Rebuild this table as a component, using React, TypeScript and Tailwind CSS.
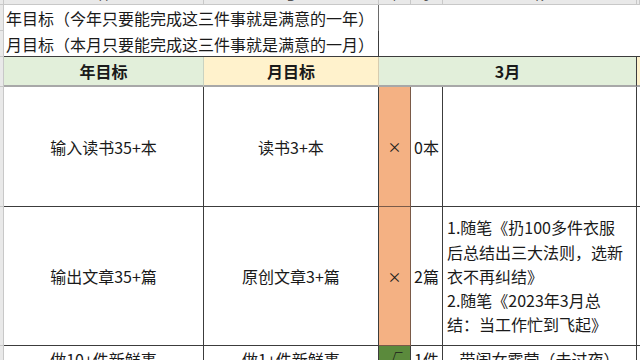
import React from "react";

const font = { fontFamily: '"Noto Sans CJK SC", "Noto Sans", sans-serif' };

export default function App() {
  const dark = "border-[#3c3c3c]";
  return (
    <div
      className="w-[640px] h-[360px] overflow-hidden bg-white text-[#1a1a1a] text-[16px]"
      style={font}
    >
      <div className="grid grid-cols-[4px_200px_175px_32px_32px_194px_1fr] grid-rows-[5px_26px_26px_30px_120px_139px_40px]">
        {/* top column-letter strip */}
        <div className="bg-[#e9e9e9] border-b border-r border-[#c8c8c8]" />
        {["A", "B", "I", "J", "K", ""].map((l, i) => (
          <div
            key={i}
            className="bg-[#e9e9e9] border-b border-r border-[#c8c8c8] overflow-hidden flex justify-center"
          >
            <span className="text-[12px] leading-[12px] -mt-[9px] text-[#555]" style={{ fontFamily: '"Liberation Sans", sans-serif' }}>
              {l}
            </span>
          </div>
        ))}

        {/* row 1 */}
        <div className="bg-[#e9e9e9] border-r border-b border-[#c8c8c8]" />
        <div className="col-span-2 border-r border-[#6a6a6a] pl-[2px] flex items-center whitespace-nowrap leading-none">
          年目标（今年只要能完成这三件事就是满意的一年）
        </div>
        <div className={`col-span-4 row-span-2 border-b ${dark}`} />

        {/* row 2 */}
        <div className="bg-[#e9e9e9] border-r border-b border-[#c8c8c8]" />
        <div className={`col-span-2 border-r border-b ${dark} pl-[2px] flex items-center whitespace-nowrap leading-none`}>
          月目标（本月只要能完成这三件事就是满意的一月）
        </div>

        {/* header row */}
        <div className="bg-[#e9e9e9] border-r border-b border-[#c8c8c8]" />
        <div className="bg-[#e2efda] border-r border-[#c9d3c2] border-b-2 border-b-[#a8a8a8] flex items-center justify-center font-bold">
          年目标
        </div>
        <div className="bg-[#fff2cc] border-r border-[#d6ccb0] border-b-2 border-b-[#a8a8a8] flex items-center justify-center font-bold">
          月目标
        </div>
        <div className={`col-span-3 bg-[#e2efda] border-r ${dark} border-b-2 border-b-[#a8a8a8] flex items-center justify-center font-bold`}>
          3月
        </div>
        <div className="bg-[#fff2cc] border-b-2 border-b-[#a8a8a8]" />

        {/* row 3 */}
        <div className="bg-[#e9e9e9] border-r border-b border-[#c8c8c8]" />
        <div className={`border-r border-b ${dark} flex items-center justify-center`}>输入读书35+本</div>
        <div className={`border-r border-b ${dark} flex items-center justify-center`}>读书3+本</div>
        <div className={`bg-[#f4b183] border-r border-b border-[#7a5a48] flex items-center justify-center text-[14px]`}>×</div>
        <div className={`border-r border-b ${dark} flex items-center justify-center whitespace-nowrap`}>0本</div>
        <div className={`border-r border-b ${dark}`} />
        <div className={`border-b ${dark}`} />

        {/* row 4 */}
        <div className="bg-[#e9e9e9] border-r border-b border-[#c8c8c8]" />
        <div className={`border-r border-b ${dark} flex items-center justify-center`}>输出文章35+篇</div>
        <div className={`border-r border-b ${dark} flex items-center justify-center`}>原创文章3+篇</div>
        <div className={`bg-[#f4b183] border-r border-b border-[#7a5a48] flex items-center justify-center text-[14px]`}>×</div>
        <div className={`border-r border-b ${dark} flex items-center justify-center whitespace-nowrap`}>2篇</div>
        <div className={`border-r border-b ${dark} flex flex-col justify-center pl-[4px] leading-[24.3px] whitespace-nowrap`}>
          <span>1.随笔《扔100多件衣服</span>
          <span>后总结出三大法则，选新</span>
          <span>衣不再纠结》</span>
          <span>2.随笔《2023年3月总</span>
          <span>结：当工作忙到飞起》</span>
        </div>
        <div className={`border-b ${dark}`} />

        {/* row 5 */}
        <div className="bg-[#e9e9e9] border-r border-[#c8c8c8]" />
        <div className={`border-r ${dark} flex justify-center leading-[24px] pt-[1px]`}>做10+件新鲜事</div>
        <div className={`border-r ${dark} flex justify-center leading-[24px] pt-[1px]`}>做1+件新鲜事</div>
        <div className={`bg-[#5b8a3c] border-r ${dark} flex justify-center leading-[24px] pt-[1px]`}>√</div>
        <div className={`border-r ${dark} flex justify-center leading-[24px] pt-[1px] whitespace-nowrap`}>1件</div>
        <div className={`border-r ${dark} flex justify-center leading-[24px] pt-[1px] whitespace-nowrap`}>带闺女露营（未过夜）</div>
        <div />
      </div>
    </div>
  );
}
